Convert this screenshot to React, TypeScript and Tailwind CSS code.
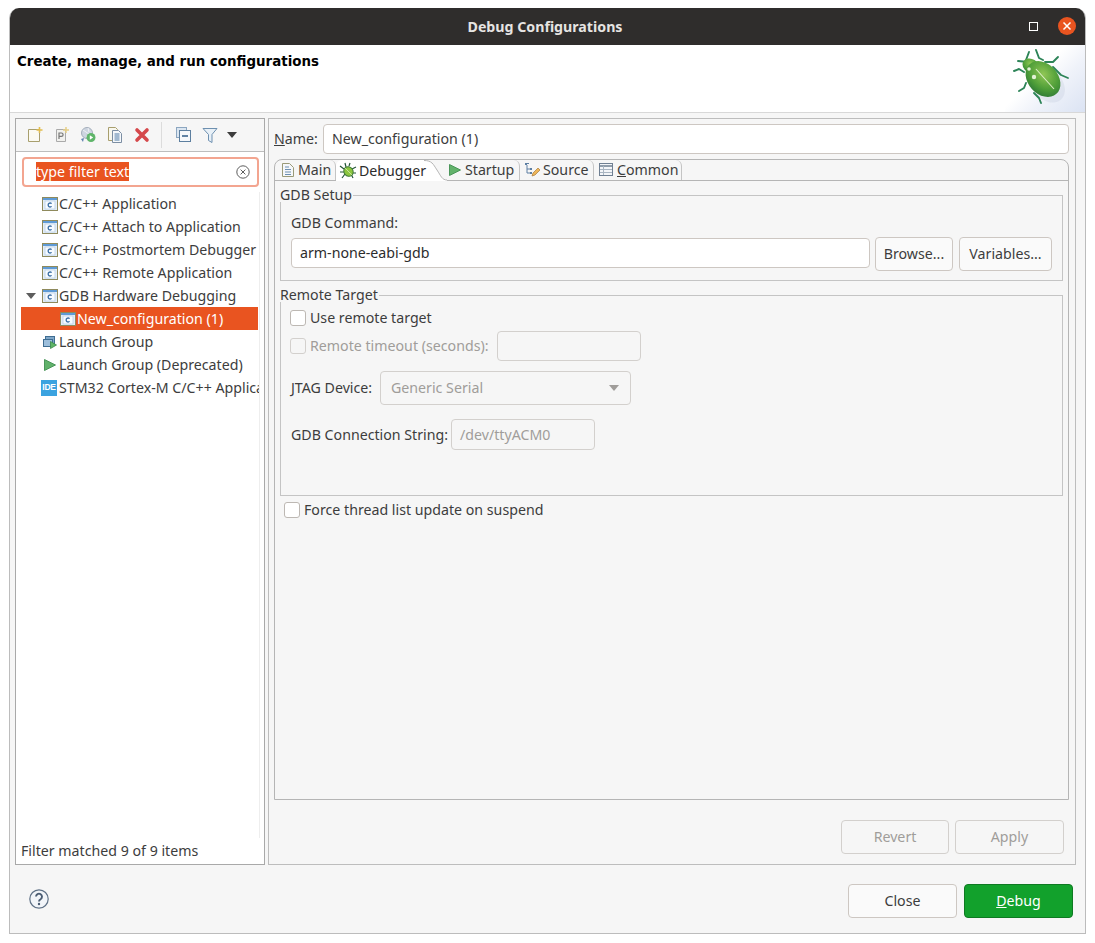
import type { ReactNode } from "react";

const ui = "font-['Noto_Sans',sans-serif] text-[14.2px] leading-[20px]";

function CIcon() {
  return (
    <svg width="16" height="16" viewBox="0 0 16 16" className="shrink-0">
      <rect x="0.5" y="1.5" width="15" height="13" fill="#e4eef8" stroke="#8f8a5c" />
      <rect x="1" y="2" width="14" height="2" fill="#5f9bd6" />
      <rect x="3" y="5" width="10" height="8" fill="#f7fbff" stroke="#a9c4de" strokeWidth="0.6" />
      <path d="M9.6 7.6a2 2 0 1 0 0 2.8" fill="none" stroke="#3a6ea5" strokeWidth="1.3" />
    </svg>
  );
}

function PlayIcon({ size = 16 }: { size?: number }) {
  return (
    <svg width={size} height={size} viewBox="0 0 16 16" className="shrink-0">
      <path d="M2.5 2.5v11l11-5.5z" fill="#62b26b" stroke="#3f8f50" strokeWidth="0.9" strokeLinejoin="round" />
    </svg>
  );
}

function LaunchGroupIcon() {
  return (
    <svg width="16" height="16" viewBox="0 0 16 16" className="shrink-0">
      <rect x="3.5" y="2.5" width="9" height="7" fill="#7ea6c8" stroke="#3f6d92" />
      <rect x="1.5" y="5.5" width="9" height="7" fill="#9dbfdc" stroke="#3f6d92" />
      <path d="M8.5 7.5v7l6-3.5z" fill="#5fb566" stroke="#3a8a48" strokeWidth="0.8" />
    </svg>
  );
}

function IdeIcon() {
  return (
    <span className="mr-px flex h-[16px] w-[16px] shrink-0 items-center justify-center bg-[#3ba3e0] font-['Liberation_Sans',sans-serif] text-[8.5px] font-bold leading-none tracking-[-0.3px] text-white">
      IDE
    </span>
  );
}

function BugSmall() {
  return (
    <svg width="18" height="18" viewBox="0 0 18 18" className="shrink-0">
      <path d="M6 1l1 4M11 1l-1 3M1 4l4 3M17 5l-4 2M1 10h4M17 11h-4M3 16l3-4M14 16l-2-4" stroke="#25563a" strokeWidth="1.2" />
      <ellipse cx="9.5" cy="9.5" rx="4.5" ry="5" transform="rotate(-40 9.5 9.5)" fill="#8cc63f" stroke="#3f7a35" />
      <path d="M6 6l7 7" stroke="#dff0c0" strokeWidth="0.7" />
    </svg>
  );
}

function DocIcon() {
  return (
    <svg width="16" height="16" viewBox="0 0 16 16" className="shrink-0">
      <path d="M2.5 1.5h7l4 4v9h-11z" fill="#f5f7fa" stroke="#9a9a78" />
      <path d="M5 5h4M5 7.5h6M5 10h6M5 12.5h6" stroke="#6c8fb0" />
    </svg>
  );
}

function SourceIcon() {
  return (
    <svg width="16" height="16" viewBox="0 0 16 16" className="shrink-0">
      <path d="M2 1.5h3M3 3v8h3M3 7h3" stroke="#5d7fa3" fill="none" />
      <rect x="1" y="1" width="2" height="2" fill="#5d7fa3" />
      <rect x="6" y="6" width="2" height="2" fill="#5d7fa3" />
      <rect x="6" y="10" width="2" height="2" fill="#5d7fa3" />
      <path d="M8 14l1-3 5-5 2 2-5 5z" fill="#eeb65a" stroke="#a87b3a" strokeWidth="0.7" />
    </svg>
  );
}

function TableIcon() {
  return (
    <svg width="16" height="16" viewBox="0 0 16 16" className="shrink-0">
      <rect x="1.5" y="1.5" width="13" height="12" fill="#f3f5f8" stroke="#6f7f92" />
      <path d="M2 4h12" stroke="#6f7f92" strokeWidth="1.6" />
      <path d="M2 7.5h12M2 10.5h12M5.5 4v9" stroke="#a9b5c2" />
    </svg>
  );
}

function Toolbar() {
  return (
    <div className="flex h-[33px] shrink-0 items-center border-b border-[#bdbdbd] bg-[#f6f6f6]">
      <svg width="16" height="16" viewBox="0 0 16 16" className="ml-[12px] shrink-0">
        <path d="M.5 2.5h11v12H.5z" fill="#fbfaf2" stroke="#a89f6e" />
        <path d="M11.5 0v6M8.5 3h6" stroke="#e2bd4f" strokeWidth="1.6" />
      </svg>
      <svg width="16" height="16" viewBox="0 0 16 16" className="ml-[10px] shrink-0">
        <path d="M2.5 2.5h9v12h-9z" fill="#f1f1ee" stroke="#aaaaaa" />
        <path d="M12 0v6M9 3h6" stroke="#e6cf86" strokeWidth="1.5" />
        <path d="M5 12V6h2.4a1.6 1.6 0 0 1 0 3.4H5" fill="none" stroke="#777" strokeWidth="1.2" />
      </svg>
      <svg width="16" height="16" viewBox="0 0 16 16" className="ml-[10px] shrink-0">
        <circle cx="7" cy="6" r="5.5" fill="#cdd5e0" stroke="#a4aebb" />
        <path d="M3 3l6 4-3 3M8 1l1 4" stroke="#eef1f5" fill="none" />
        <path d="M1 12l3-1-1 4z" fill="#5f82b0" />
        <circle cx="11" cy="10.5" r="4.5" fill="#5fb56a" />
        <path d="M9.8 8.3v4.4l3.4-2.2z" fill="#fff" />
      </svg>
      <svg width="16" height="16" viewBox="0 0 16 16" className="ml-[11px] shrink-0">
        <path d="M1.5 .5h7l2 2v11h-9z" fill="#f8f7ee" stroke="#a89f6e" />
        <path d="M5.5 3.5h6l3 3v9h-9z" fill="#f5f8fb" stroke="#7c8ea3" />
        <path d="M7.5 7h5M7.5 9h5M7.5 11h5M7.5 13h5" stroke="#4f7aa6" />
      </svg>
      <svg width="16" height="16" viewBox="0 0 16 16" className="ml-[11px] shrink-0">
        <path d="M3 3l10 10M13 3L3 13" stroke="#d5484b" strokeWidth="3.6" strokeLinecap="round" />
      </svg>
      <span className="ml-[11px] h-[26px] w-px shrink-0 bg-[#dcdcdc]" />
      <svg width="16" height="16" viewBox="0 0 16 16" className="ml-[14px] shrink-0">
        <rect x="0.5" y="0.5" width="10" height="10" fill="#dbe6f1" stroke="#8ca6c0" />
        <rect x="3.5" y="3.5" width="11" height="11" fill="#f5f8fb" stroke="#5d7f9f" />
        <path d="M6 9h6" stroke="#2f5d87" strokeWidth="1.4" />
      </svg>
      <svg width="16" height="16" viewBox="0 0 16 16" className="ml-[10px] shrink-0">
        <path d="M1 1.5h14L10 7.5v8l-3.5-2V7.5z" fill="#e8f0f7" stroke="#6e90b0" strokeLinejoin="round" />
      </svg>
      <svg width="10" height="6" viewBox="0 0 10 6" className="ml-[9px] shrink-0">
        <path d="M0 0h10L5 6z" fill="#3d3d3d" />
      </svg>
    </div>
  );
}

function TreeRow({
  icon,
  label,
  indent = 21,
  selected = false,
  expander = false,
}: {
  icon: ReactNode;
  label: string;
  indent?: number;
  selected?: boolean;
  expander?: boolean;
}) {
  return (
    <div
      className={`flex h-[23px] items-center whitespace-nowrap ${selected ? "bg-[#e95420] text-white" : "text-[#3d3d3d]"}`}
      style={{ paddingLeft: indent }}
    >
      {expander ? (
        <svg width="10" height="6" viewBox="0 0 10 6" className="absolute left-[5px] shrink-0">
          <path d="M0 0h10L5 6z" fill="#5d5d5d" />
        </svg>
      ) : null}
      {icon}
      <span className="ml-px">{label}</span>
    </div>
  );
}

function Btn({
  children,
  width,
  disabled = false,
  primary = false,
}: {
  children: ReactNode;
  width: string;
  disabled?: boolean;
  primary?: boolean;
}) {
  const look = primary
    ? "border-[#0e7a22] bg-[#12a12c] text-white"
    : disabled
      ? "border-[#d3d0cd] bg-[#f6f6f6] text-[#a09d9a]"
      : "border-[#cdc7c2] bg-[#fafafa] text-[#3d3d3d]";
  return (
    <div className={`flex h-[34px] shrink-0 items-center justify-center rounded-[4px] border ${width} ${look}`}>
      {children}
    </div>
  );
}

function Check({ disabled = false }: { disabled?: boolean }) {
  return (
    <span
      className={`block h-[16px] w-[16px] shrink-0 rounded-[3px] border ${disabled ? "border-[#d3d0cd] bg-[#f6f6f6]" : "border-[#bdb8b3] bg-white"}`}
    />
  );
}

function Beetle() {
  return (
    <svg width="60" height="64" viewBox="0 0 60 64" className="mb-[-1px] mr-[12px]">
      <defs>
        <radialGradient id="shell" cx="0.42" cy="0.38" r="0.7">
          <stop offset="0" stopColor="#93c956" />
          <stop offset="0.6" stopColor="#4f9f38" />
          <stop offset="1" stopColor="#2a7636" />
        </radialGradient>
        <pattern id="dots" width="2" height="2" patternUnits="userSpaceOnUse">
          <circle cx="1" cy="1" r="0.35" fill="#2c6f2a" opacity="0.55" />
        </pattern>
      </defs>
      <ellipse cx="34" cy="35" rx="21" ry="15" transform="rotate(48 34 35)" fill="#8f9bb8" opacity="0.14" />
      <g fill="none" stroke="#2d8458" strokeWidth="1.9" strokeLinecap="round" strokeLinejoin="round">
        <path d="M5 12l10 1M14 18l-1-7 3-8" />
        <path d="M23 1l3 8 4 2" />
        <path d="M32 13l8 0 5-5" />
        <path d="M40 18l8 8 7 3" />
        <path d="M11 23l-5-3-5 2" />
        <path d="M13 34l-2 5-5 3" />
        <path d="M21 44l5 5 2 5" />
      </g>
      <ellipse cx="18" cy="17" rx="9" ry="7" transform="rotate(30 18 17)" fill="url(#shell)" />
      <ellipse cx="30" cy="30" rx="20" ry="15" transform="rotate(48 30 30)" fill="url(#shell)" />
      <ellipse cx="30" cy="30" rx="20" ry="15" transform="rotate(48 30 30)" fill="url(#dots)" />
      <path d="M23 20l18 20" stroke="#dcefc8" strokeWidth="1.1" />
      <circle cx="16" cy="20" r="1.8" fill="#e3f1d5" />
      <circle cx="21" cy="28" r="2.2" fill="#e3f1d5" />
    </svg>
  );
}

export default function App() {
  return (
    <div className={`h-[943px] w-[1095px] bg-white pl-[9px] pt-[8px] ${ui}`}>
      <div className="flex h-[926px] w-[1077px] flex-col overflow-hidden rounded-t-[10px] border border-t-0 border-[#bcbcbc] bg-[#f6f6f6]">
        <div className="relative flex h-[37px] shrink-0 items-center justify-center bg-[#2f2d2c] pr-[5px]">
          <span className="font-bold text-[#e6e4e2]">Debug Configurations</span>
          <span className="absolute right-[47px] top-[14px] h-[9px] w-[9px] border border-white" />
          <span className="absolute right-[9px] top-[9px] flex h-[18px] w-[18px] items-center justify-center rounded-full bg-[#e95420]">
            <svg width="10" height="10" viewBox="0 0 10 10">
              <path d="M1.5 1.5l7 7M8.5 1.5l-7 7" stroke="#fff" strokeWidth="1.5" />
            </svg>
          </span>
        </div>

        <div className="flex h-[68px] shrink-0 justify-between overflow-hidden border-b border-[#d8d8d8] bg-white">
          <div className="pl-[7px] pt-[7px] font-['DejaVu_Sans',sans-serif] text-[13.4px] font-bold leading-[20px] text-black">
            Create, manage, and run configurations
          </div>
          <div className="flex w-[80px] items-end justify-end bg-[linear-gradient(135deg,#ffffff_42%,#f0f3fa_62%,#dbe3f3_100%)]">
            <Beetle />
          </div>
        </div>

        <div className="flex shrink-0 pl-[5px] pt-[5px]">
          <div className="flex h-[747px] w-[250px] shrink-0 flex-col border border-[#a9a9a9] bg-white">
            <Toolbar />
            <div className="ml-[6px] mt-[5px] flex h-[30px] w-[237px] shrink-0 items-center rounded-[4px] border-2 border-[#f3a590] bg-white pl-[12px] pr-[7px]">
              <span className="flex-1">
                <span className="bg-[#e95420] text-white">type filter text</span>
              </span>
              <svg width="14" height="14" viewBox="0 0 14 14">
                <circle cx="7" cy="7" r="6.2" fill="none" stroke="#5d5d5d" />
                <path d="M4.6 4.6l4.8 4.8M9.4 4.6L4.6 9.4" stroke="#5d5d5d" />
              </svg>
            </div>
            <div className="relative ml-[5px] mt-[5px] h-[646px] w-[239px] overflow-hidden border-r border-[#eeeeee] pr-px">
              <TreeRow icon={<CIcon />} label="C/C++ Application" />
              <TreeRow icon={<CIcon />} label="C/C++ Attach to Application" />
              <TreeRow icon={<CIcon />} label="C/C++ Postmortem Debugger" />
              <TreeRow icon={<CIcon />} label="C/C++ Remote Application" />
              <div className="relative">
                <TreeRow icon={<CIcon />} label="GDB Hardware Debugging" expander />
              </div>
              <TreeRow icon={<CIcon />} label="New_configuration (1)" indent={39} selected />
              <TreeRow icon={<LaunchGroupIcon />} label="Launch Group" />
              <TreeRow icon={<PlayIcon />} label="Launch Group (Deprecated)" />
              <TreeRow icon={<IdeIcon />} label="STM32 Cortex-M C/C++ Application" indent={20} />
            </div>
            <div className="pl-[5px] pt-[3px] text-[#3d3d3d]">Filter matched 9 of 9 items</div>
          </div>

          <div className="ml-[3px] flex h-[747px] w-[808px] shrink-0 flex-col border border-[#bdbdbd] px-[5px] pt-[5px]">
            <div className="flex h-[30px] shrink-0 items-center text-[#3d3d3d]">
              <span className="w-[49px]">
                <u>N</u>ame:
              </span>
              <div className="flex h-[30px] w-[746px] items-center rounded-[4px] border border-[#cdc7c2] bg-white pl-[8px]">
                New_configuration (1)
              </div>
            </div>

            <div className="mt-[5px] flex h-[641px] w-[795px] shrink-0 flex-col rounded-t-[8px] border border-[#b5b5b5]">
              <div className="flex h-[21px] shrink-0 border-b border-[#b5b5b5] text-[#3d3d3d]">
                <div className="flex w-[61px] items-center gap-[2px] rounded-tr-[6px] border-r border-[#c4c4c4] pl-[5px]">
                  <DocIcon />
                  <span>Main</span>
                </div>
                <div className="z-20 flex h-[21px] w-[88px] items-center gap-[2px] whitespace-nowrap rounded-tl-[6px] bg-white pl-[3px] text-[#2c2c2c]">
                  <BugSmall />
                  <span>Debugger</span>
                </div>
                <svg width="23" height="21" viewBox="0 0 23 21" className="z-10 shrink-0">
                  <path d="M0 0C8 0 9 4 13 10C17 16 18 20 23 20V21H0z" fill="#fff" />
                  <path d="M0 .5C8 .5 9 4 13 10C17 16 18 20 23 20" fill="none" stroke="#b5b5b5" />
                </svg>
                <div className="flex w-[73px] items-center gap-[2px] rounded-tr-[6px] border-r border-[#c4c4c4]">
                  <PlayIcon />
                  <span>Startup</span>
                </div>
                <div className="flex w-[74px] items-center gap-[3px] rounded-tr-[6px] border-r border-[#c4c4c4] pl-[4px]">
                  <SourceIcon />
                  <span>Source</span>
                </div>
                <div className="flex w-[88px] items-center gap-[3px] rounded-tr-[6px] border-r border-[#c4c4c4] pl-[4px]">
                  <TableIcon />
                  <span>
                    <u>C</u>ommon
                  </span>
                </div>
              </div>

              <div className="px-[5px] text-[#3d3d3d]">
                <fieldset className="mt-[7px] h-[93px] border border-[#c4c4c4] px-[10px] pb-0 pt-[11px]">
                  <legend className="-ml-[11px] p-0 pr-px leading-[14px]">GDB Setup</legend>
                  <div className="h-[20px]">GDB Command:</div>
                  <div className="mt-[5px] flex">
                    <div className="flex h-[30px] w-[579px] items-center rounded-[4px] border border-[#cdc7c2] bg-white pl-[8px] text-[#2c2c2c]">
                      arm-none-eabi-gdb
                    </div>
                    <div className="ml-[5px] -mt-px">
                      <Btn width="w-[78px]">Browse...</Btn>
                    </div>
                    <div className="ml-[6px] -mt-px">
                      <Btn width="w-[93px]">Variables...</Btn>
                    </div>
                  </div>
                </fieldset>

                <fieldset className="mt-[7px] h-[208px] border border-[#c4c4c4] px-[10px] pb-0 pt-[6px]">
                  <legend className="-ml-[11px] p-0 pr-px leading-[14px]">Remote Target</legend>
                  <div className="-ml-px flex h-[20px] items-center gap-[4px]">
                    <Check />
                    <span>Use remote target</span>
                  </div>
                  <div className="-ml-px mt-[3px] flex h-[30px] items-center gap-[4px] text-[#a09d9a]">
                    <Check disabled />
                    <span className="w-[183px]">Remote timeout (seconds):</span>
                    <div className="h-[30px] w-[144px] rounded-[4px] border border-[#d3d0cd]" />
                  </div>
                  <div className="mt-[10px] flex h-[34px] items-center">
                    <span className="w-[89px]">JTAG Device:</span>
                    <div className="flex h-[34px] w-[251px] items-center justify-between rounded-[4px] border border-[#d3d0cd] pl-[10px] pr-[11px] text-[#a09d9a]">
                      <span>Generic Serial</span>
                      <svg width="10" height="6" viewBox="0 0 10 6">
                        <path d="M0 0h10L5 6z" fill="#a09d9a" />
                      </svg>
                    </div>
                  </div>
                  <div className="mt-[14px] flex h-[31px] items-center">
                    <span className="w-[160px]">GDB Connection String:</span>
                    <div className="flex h-[31px] w-[144px] items-center rounded-[4px] border border-[#d3d0cd] pl-[8px] text-[#a09d9a]">
                      /dev/ttyACM0
                    </div>
                  </div>
                </fieldset>

                <div className="ml-[4px] mt-[4px] flex h-[20px] items-center gap-[4px]">
                  <Check />
                  <span>Force thread list update on suspend</span>
                </div>
              </div>
            </div>

            <div className="mr-[6px] mt-[20px] flex justify-end gap-[6px]">
              <Btn width="w-[108px]" disabled>
                Revert
              </Btn>
              <Btn width="w-[109px]" disabled>
                Apply
              </Btn>
            </div>
          </div>
        </div>

        <div className="flex flex-1 items-start justify-between pl-[19px] pr-[12px] pt-[19px]">
          <svg width="20" height="20" viewBox="0 0 20 20" className="mt-[5px]">
            <circle cx="10" cy="10" r="9.2" fill="#f2f5f9" stroke="#5f7186" strokeWidth="1.2" />
            <path d="M7 7.6a3 3 0 1 1 4.6 2.6c-1 .6-1.6 1.1-1.6 2.2" fill="none" stroke="#4b5d73" strokeWidth="1.9" />
            <circle cx="10" cy="15" r="1.2" fill="#4b5d73" />
          </svg>
          <div className="flex gap-[7px]">
            <Btn width="w-[109px]">Close</Btn>
            <Btn width="w-[109px]" primary>
              <span>
                <u>D</u>ebug
              </span>
            </Btn>
          </div>
        </div>
      </div>
    </div>
  );
}
